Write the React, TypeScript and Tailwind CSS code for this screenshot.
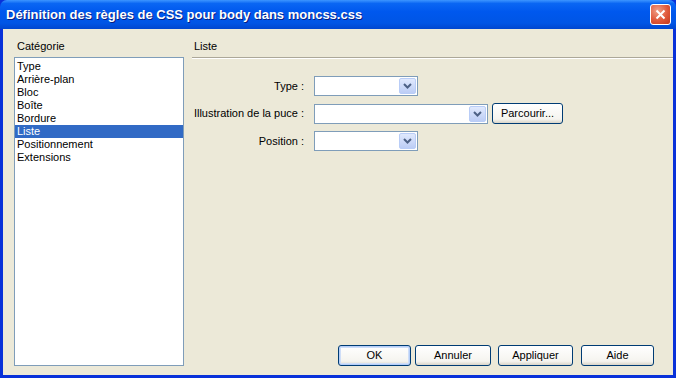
import React from 'react';

const categories = ['Type', 'Arrière-plan', 'Bloc', 'Boîte', 'Bordure', 'Liste', 'Positionnement', 'Extensions'];

function Arrow() {
  return (
    <div className="w-[17px] h-[16px] mr-[1px] rounded-[2px] border border-[#b9cdf7] bg-[linear-gradient(180deg,#e0e9fd,#bccdf5)] flex items-center justify-center">
      <svg width="9" height="6" viewBox="0 0 9 6">
        <path d="M1 1 L4.5 4.5 L8 1" fill="none" stroke="#4d6185" strokeWidth="2" />
      </svg>
    </div>
  );
}

function Combo({ width }: { width: string }) {
  return (
    <div className={`${width} h-[20px] bg-white border border-[#7f9db9] flex items-center justify-end`}>
      <Arrow />
    </div>
  );
}

function XpButton({ label, def }: { label: string; def?: boolean }) {
  return (
    <button
      className={`w-full h-[21px] rounded-[3px] border border-[#003c74] ${def ? 'shadow-[inset_0_0_0_1px_#b5cef8,inset_0_0_0_2px_#cfdef8]' : ''} bg-[linear-gradient(180deg,#ffffff,#f5f4ef_80%,#d9d4c8)] text-[11px] text-black flex items-center justify-center`}
    >
      {label}
    </button>
  );
}

export default function App() {
  return (
    <div className="w-[676px] h-[378px] bg-[#0831d9] flex flex-col overflow-hidden font-['Liberation_Sans',Arial,sans-serif] text-[11px] text-black">
      <div className="h-[29px] shrink-0 flex items-center justify-between pl-[6px] pr-[5px] rounded-t-[7px] bg-[linear-gradient(180deg,#3d95ff_0%,#0a66f3_12%,#0058ee_40%,#0055e5_80%,#0046cf_100%)]">
        <span className="text-white font-bold text-[13px] [text-shadow:1px_1px_0_#0a1e80]">
          Définition des règles de CSS pour body dans moncss.css
        </span>
        <div className="w-[21px] h-[21px] rounded-[3px] border border-white bg-[radial-gradient(circle_at_35%_30%,#f0a088,#e0583a_55%,#c2381d)] flex items-center justify-center">
          <svg width="11" height="11" viewBox="0 0 11 11">
            <path d="M1.5 1.5 L9.5 9.5 M9.5 1.5 L1.5 9.5" stroke="white" strokeWidth="2" />
          </svg>
        </div>
      </div>
      <div className="flex-1 mx-[3px] mb-[3px] bg-[#ece9d8] flex pt-[11px]">
        <div className="w-[170px] ml-[11px] flex flex-col">
          <div className="h-[17px] pl-[3px] leading-[13px]">Catégorie</div>
          <div className="h-[309px] bg-white border border-[#7f9db9] pt-[2px]">
            {categories.map((c) => (
              <div
                key={c}
                className={`h-[13px] leading-[13px] pl-[2px] ${c === 'Liste' ? 'bg-[#316ac5] text-white' : ''}`}
              >
                {c}
              </div>
            ))}
          </div>
        </div>
        <div className="flex-1 ml-[8px] flex flex-col">
          <div className="h-[17px] pl-[2px] leading-[13px]">Liste</div>
          <div className="h-[2px] border-t border-[#aca899] border-b border-b-white" />
          <div className="flex flex-col gap-[7px] mt-[17px]">
            <div className="flex items-center">
              <div className="w-[114px] text-right pr-[2px]">Type :</div>
              <div className="ml-[8px]"><Combo width="w-[104px]" /></div>
            </div>
            <div className="flex items-center">
              <div className="w-[114px] text-right pr-[2px]">Illustration de la puce :</div>
              <div className="ml-[8px]"><Combo width="w-[174px]" /></div>
              <div className="ml-[4px] w-[71px]"><XpButton label="Parcourir..." /></div>
            </div>
            <div className="flex items-center">
              <div className="w-[114px] text-right pr-[2px]">Position :</div>
              <div className="ml-[8px]"><Combo width="w-[104px]" /></div>
            </div>
          </div>
          <div className="mt-auto mb-[9px] flex justify-end pr-[19px]">
            <div className="w-[73px]"><XpButton label="OK" def /></div>
            <div className="w-[76px] ml-[4px]"><XpButton label="Annuler" /></div>
            <div className="w-[75px] ml-[7px]"><XpButton label="Appliquer" /></div>
            <div className="w-[73px] ml-[8px]"><XpButton label="Aide" /></div>
          </div>
        </div>
      </div>
    </div>
  );
}
